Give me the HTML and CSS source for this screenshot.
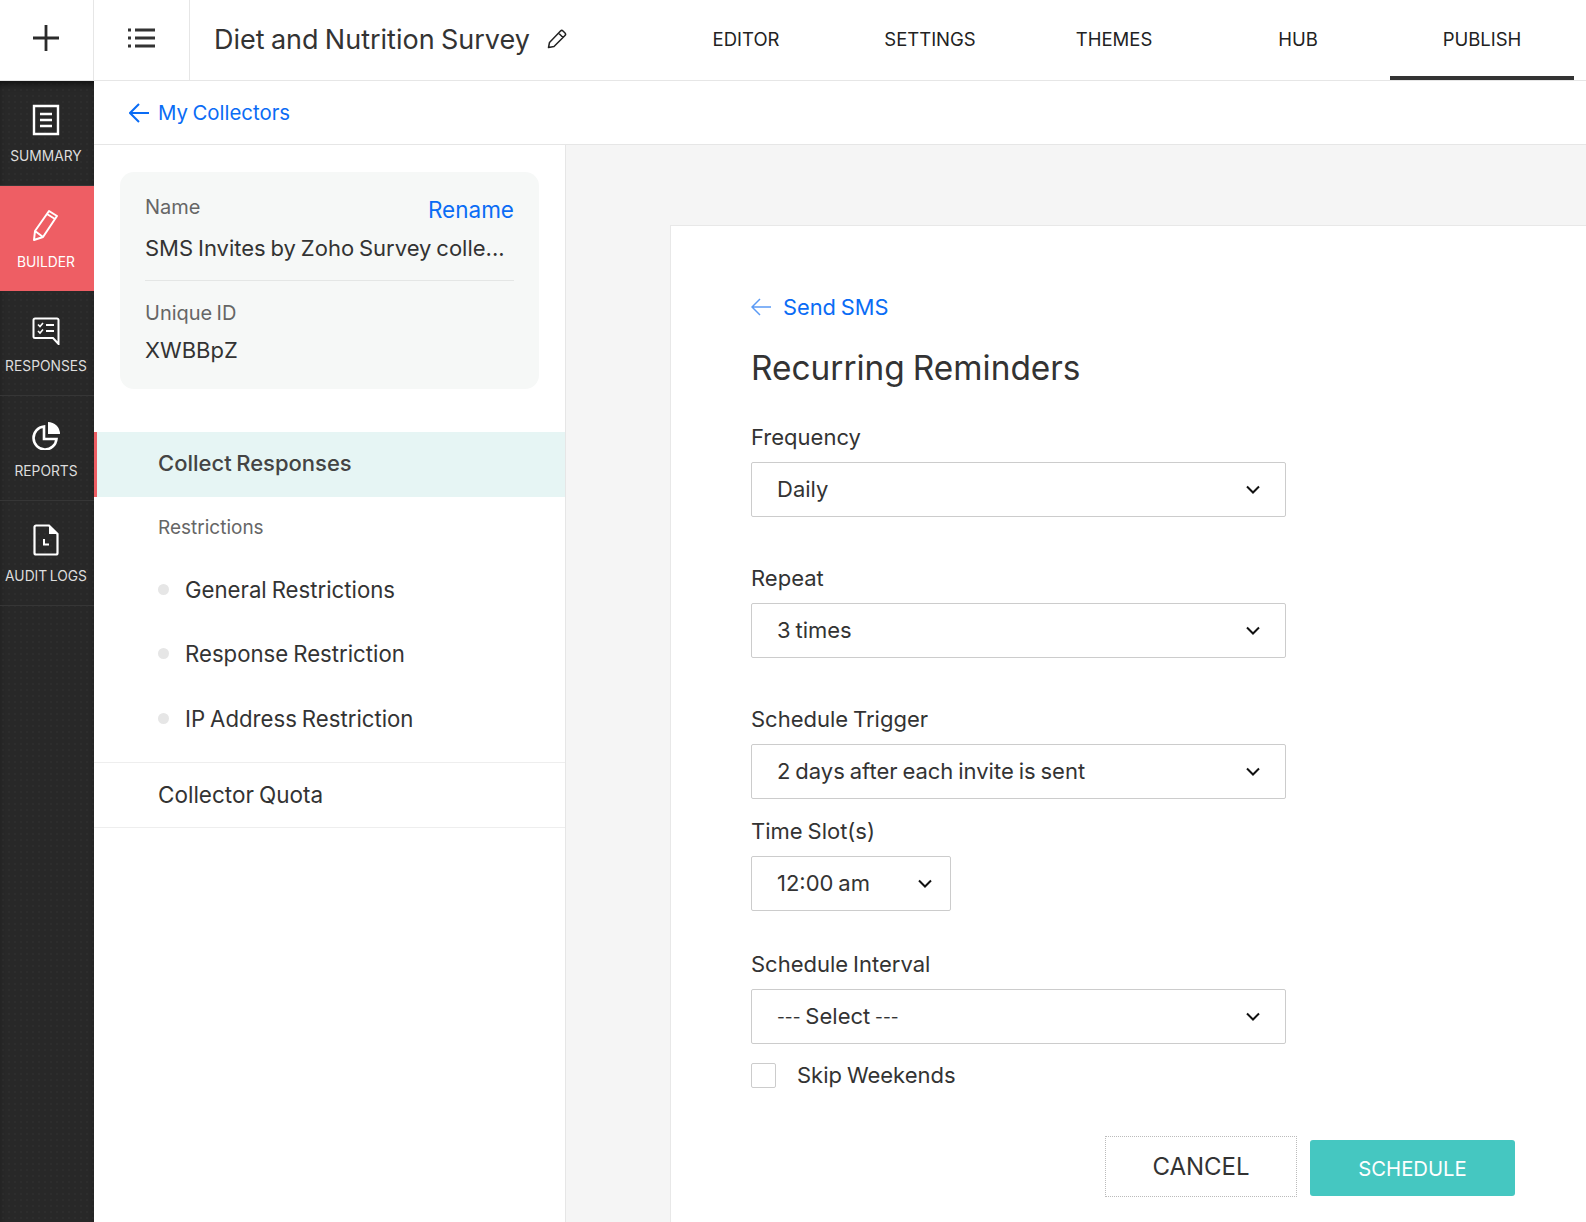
FILE: index.html
```html
<!DOCTYPE html>
<html lang="en-US">
<head>
  <title>Diet and Nutrition Survey</title>
  <meta charset="utf-8">
  <link rel="stylesheet" href="styles.css">
</head>
<body>
  <header class="top-bar">
    <div class="top-cell add-cell">
      <svg width="30" height="30" viewBox="0 0 30 30"><path d="M15 2v26M2 15h26" stroke="#2b2b2b" stroke-width="2.800" fill="none"/></svg>
    </div>
    <div class="top-cell list-cell">
      <svg width="27" height="22" viewBox="0 0 27 22"><path d="M7 3h20M7 11h20M7 19h20" stroke="#333" stroke-width="3" fill="none"/><path d="M0 3h3M0 11h3M0 19h3" stroke="#333" stroke-width="3" fill="none"/></svg>
    </div>
    <div class="survey-title">
      <span>Diet and Nutrition Survey</span>
      <svg width="20" height="20" viewBox="0 0 20 20"><path d="M1.500 18.500l1-5L13.500 2a1.800 1.800 0 0 1 2.500 0l2 2a1.800 1.800 0 0 1 0 2.500L7 17.500zM11.500 4l4.500 4.500" fill="none" stroke="#222" stroke-width="1.500" stroke-linejoin="round"/></svg>
    </div>
    <nav class="top-tabs">
      <a>EDITOR</a>
      <a>SETTINGS</a>
      <a>THEMES</a>
      <a>HUB</a>
      <a class="active">PUBLISH</a>
    </nav>
  </header>

  <div class="page">
    <aside class="rail">
      <a class="rail-item">
        <svg width="28" height="32" viewBox="0 0 28 32"><path d="M2 2h24v28H2z" fill="none" stroke="#fff" stroke-width="2.400"/><path d="M8 10h12M8 16h12M8 22h12" stroke="#fff" stroke-width="2.400" fill="none"/></svg>
        <span>SUMMARY</span>
      </a>
      <a class="rail-item active">
        <svg width="28" height="34" viewBox="0 0 28 34"><path d="M2 32l1-9L17 3l8 5-14 21zM15 6l8 5M3 23l8 6" fill="none" stroke="#fff" stroke-width="2" stroke-linejoin="round"/></svg>
        <span>BUILDER</span>
      </a>
      <a class="rail-item">
        <svg class="lift" width="28" height="28" viewBox="0 0 28 28"><path d="M3 1.500h22a1.500 1.500 0 0 1 1.500 1.500v24L21 21H3a1.500 1.500 0 0 1-1.500-1.500V3A1.500 1.500 0 0 1 3 1.500z" fill="none" stroke="#fff" stroke-width="2"/><path d="M6 7.500l2 2 3-3.500M6 14l2 2 3-3.500" fill="none" stroke="#fff" stroke-width="1.600"/><path d="M14 8h8M14 14h8" stroke="#fff" stroke-width="2" fill="none"/></svg>
        <span>RESPONSES</span>
      </a>
      <a class="rail-item">
        <svg class="lift" width="28" height="28" viewBox="0 0 28 28"><path d="M12 4.500a11.500 11.500 0 1 0 12.500 12.500H12z" fill="none" stroke="#fff" stroke-width="2.600"/><path d="M16 0a12 12 0 0 1 12 12H16z" fill="#fff"/></svg>
        <span>REPORTS</span>
      </a>
      <a class="rail-item">
        <svg width="26" height="32" viewBox="0 0 26 32"><path d="M3 1.500h13l8.500 8.500v19a1.500 1.500 0 0 1-1.500 1.500H3A1.500 1.500 0 0 1 1.500 29V3A1.500 1.500 0 0 1 3 1.500z" fill="none" stroke="#fff" stroke-width="2.200"/><path d="M16 2v8h8z" fill="#fff"/><path d="M11 15v5.500h5" fill="none" stroke="#fff" stroke-width="2"/></svg>
        <span>AUDIT LOGS</span>
      </a>
    </aside>

    <div class="content">
      <div class="crumb-bar">
        <a class="crumb">
          <svg width="20" height="20" viewBox="0 0 20 20"><path d="M10 1L1 10l9 9M1 10h19" fill="none" stroke="#0a6cf5" stroke-width="2"/></svg>
          <span>My Collectors</span>
        </a>
      </div>

      <div class="split">
        <section class="side-panel">
          <div class="info-card">
            <div class="info-top">
              <span class="info-label">Name</span>
              <a class="rename">Rename</a>
            </div>
            <div class="info-value">SMS Invites by Zoho Survey colle...</div>
            <div class="info-rule"></div>
            <div class="info-label">Unique ID</div>
            <div class="info-value id-value">XWBBpZ</div>
          </div>

          <div class="menu-row selected">Collect Responses</div>
          <div class="menu-heading">Restrictions</div>
          <ul class="sub-menu">
            <li>General Restrictions</li>
            <li>Response Restriction</li>
            <li>IP Address Restriction</li>
          </ul>
          <div class="menu-row quota">Collector Quota</div>
        </section>

        <main class="stage">
          <div class="form-card">
            <a class="back-link">
              <svg width="20" height="18" viewBox="0 0 20 18"><path d="M9 1L1 9l8 8M1 9h19" fill="none" stroke="#5b9bf5" stroke-width="1.500"/></svg>
              <span>Send SMS</span>
            </a>
            <h1>Recurring Reminders</h1>

            <label class="field-label">Frequency</label>
            <div class="select gap-big">
              <span>Daily</span>
              <svg class="chev" width="14" height="9" viewBox="0 0 14 9"><path d="M1 1.500l6 6 6-6" fill="none" stroke="#111" stroke-width="2"/></svg>
            </div>

            <label class="field-label">Repeat</label>
            <div class="select gap-big">
              <span>3 times</span>
              <svg class="chev" width="14" height="9" viewBox="0 0 14 9"><path d="M1 1.500l6 6 6-6" fill="none" stroke="#111" stroke-width="2"/></svg>
            </div>

            <label class="field-label">Schedule Trigger</label>
            <div class="select gap-small">
              <span>2 days after each invite is sent</span>
              <svg class="chev" width="14" height="9" viewBox="0 0 14 9"><path d="M1 1.500l6 6 6-6" fill="none" stroke="#111" stroke-width="2"/></svg>
            </div>

            <label class="field-label">Time Slot(s)</label>
            <div class="select narrow gap-slot">
              <span>12:00 am</span>
              <svg class="chev" width="14" height="9" viewBox="0 0 14 9"><path d="M1 1.500l6 6 6-6" fill="none" stroke="#111" stroke-width="2"/></svg>
            </div>

            <label class="field-label">Schedule Interval</label>
            <div class="select gap-check">
              <span><span class="dashes">---</span> Select <span class="dashes">---</span></span>
              <svg class="chev" width="14" height="9" viewBox="0 0 14 9"><path d="M1 1.500l6 6 6-6" fill="none" stroke="#111" stroke-width="2"/></svg>
            </div>

            <div class="check-row">
              <span class="check-box"></span>
              <span>Skip Weekends</span>
            </div>

            <div class="actions">
              <button class="btn-cancel">CANCEL</button>
              <button class="btn-schedule">SCHEDULE</button>
            </div>
          </div>
        </main>
      </div>
    </div>
  </div>
</body>
</html>
```

FILE: styles.css
```css
* {
  box-sizing: border-box;
}
html, body {
  height: 100%;
}
body {
  margin: 0;
  height: 1222px;
  overflow: hidden;
  display: flex;
  flex-direction: column;
  font-family: Inter, 'Liberation Sans', sans-serif;
  word-spacing: -1.3px;
  color: #333;
  background-color: #fff;
}
a {
  text-decoration: none;
}

/* top bar */
.top-bar {
  display: flex;
  height: 81px;
  flex: none;
  border-bottom: 1px solid #e6e6e6;
}
.top-cell {
  display: flex;
  align-items: center;
  justify-content: center;
  border-right: 1px solid #e6e6e6;
}
.add-cell {
  width: 94px;
  padding: 0 2px 5px 0;
}
.list-cell {
  width: 96px;
  padding-bottom: 5px;
}
.survey-title {
  display: flex;
  align-items: center;
  gap: 17px;
  padding: 0 0 2px 24px;
  font-size: 27px;
  color: #333;
  flex: 1;
}
.top-tabs {
  display: flex;
  margin-right: 12px;
}
.top-tabs a {
  width: 184px;
  display: flex;
  align-items: center;
  justify-content: center;
  padding-top: 2px;
  font-size: 18.500px;
  color: #222;
  border-bottom: 4px solid transparent;
}
.top-tabs a.active {
  border-bottom-color: #333;
}

/* layout */
.page {
  display: flex;
  flex: 1;
  min-height: 0;
}
.rail {
  width: 94px;
  flex: none;
  background-color: #282828;
  background-image: radial-gradient(#2d2d2d 1px, transparent 1px);
  background-size: 6px 6px;
  box-shadow: inset 0 6px 6px -3px #111;
}
.rail-item {
  height: 105px;
  display: flex;
  flex-direction: column;
  align-items: center;
  justify-content: flex-end;
  padding: 0 2px 21px 0;
  gap: 12px;
  font-size: 13.800px;
  color: #ddd;
  border-bottom: 1px solid #363636;
  white-space: nowrap;
}
.rail-item .lift {
  margin-bottom: 1px;
}
.rail-item.active {
  background-color: #ee5e64;
  color: #fff;
  border-bottom: none;
}
.content {
  flex: 1;
  display: flex;
  flex-direction: column;
  min-width: 0;
}
.crumb-bar {
  height: 64px;
  flex: none;
  display: flex;
  align-items: center;
  padding-left: 35px;
  border-bottom: 1px solid #e6e6e6;
}
.crumb {
  display: flex;
  align-items: center;
  gap: 9px;
  color: #0a6cf5;
  font-size: 20.400px;
}
.split {
  flex: 1;
  display: flex;
  min-height: 0;
}

/* left panel */
.side-panel {
  width: 472px;
  flex: none;
  border-right: 1px solid #e6e6e6;
  padding-top: 27px;
}
.info-card {
  margin: 0 26px;
  height: 217px;
  padding: 23px 25px 0;
  background-color: #f6f8f7;
  border-radius: 14px;
}
.info-top {
  display: flex;
  justify-content: space-between;
  align-items: flex-start;
}
.info-label {
  font-size: 20px;
  color: #666;
}
.rename {
  padding-top: 1px;
  font-size: 22.500px;
  color: #0a6cf5;
}
.info-value {
  margin-top: 12px;
  font-size: 22px;
  color: #333;
  white-space: nowrap;
}
.info-rule {
  height: 1px;
  background-color: #e4e6e5;
  margin: 19px 0 20px;
}
.id-value {
  margin-top: 12px;
}
.menu-row {
  height: 65px;
  display: flex;
  align-items: center;
  padding: 0 0 3px 64px;
  font-size: 22.500px;
  color: #333;
}
.menu-row.selected {
  margin-top: 43px;
  background-color: #e6f5f4;
  border-left: 3px solid #ee5e64;
  padding-left: 61px;
  font-size: 22px;
  font-weight: 500;
  color: #444;
}
.menu-heading {
  padding-left: 64px;
  margin-top: 19px;
  font-size: 19px;
  color: #666;
}
.sub-menu {
  list-style: none;
  margin: 18px 0 0;
  padding: 0 0 11px 64px;
  border-bottom: 1px solid #eee;
}
.sub-menu li {
  height: 64.500px;
  display: flex;
  align-items: center;
  font-size: 22.200px;
  color: #333;
}
.sub-menu li::before {
  content: "";
  width: 11px;
  height: 11px;
  border-radius: 50%;
  background-color: #e6e6e6;
  margin-right: 16px;
}
.menu-row.quota {
  padding-bottom: 1px;
  border-bottom: 1px solid #eee;
}

/* form */
.stage {
  flex: 1;
  min-width: 0;
  background-color: #f5f5f5;
  padding: 80px 0 0 104px;
}
.form-card {
  height: 100%;
  background-color: #fff;
  border: 1px solid #e8e8e8;
  border-right: none;
  border-bottom: none;
  padding: 68px 0 0 80px;
}
.back-link {
  display: flex;
  align-items: center;
  gap: 12px;
  color: #0a6cf5;
  font-size: 21.800px;
}
h1 {
  margin: 28px 0 0;
  font-size: 33.400px;
  font-weight: 400;
  color: #333;
}
.field-label {
  display: block;
  font-size: 22px;
  color: #333;
  margin-bottom: 12px;
}
h1 + .field-label {
  margin-top: 36px;
}
.select {
  width: 535px;
  height: 55px;
  display: flex;
  align-items: center;
  justify-content: space-between;
  padding: 0 25px 1px;
  font-size: 22px;
  color: #333;
  border: 1px solid #ccc;
  border-radius: 2px;
}
.select.narrow {
  width: 200px;
  padding-right: 18px;
}
.dashes {
  font-size: 17px;
  vertical-align: 1px;
}
.gap-big {
  margin-bottom: 48px;
}
.gap-small {
  margin-bottom: 19px;
}
.gap-slot {
  margin-bottom: 40px;
}
.gap-check {
  margin-bottom: 18px;
}
.check-row {
  display: flex;
  align-items: center;
  gap: 21px;
  font-size: 22px;
  color: #333;
}
.check-box {
  width: 25px;
  height: 25px;
  border: 1px solid #ccc;
  border-radius: 2px;
}
.actions {
  display: flex;
  align-items: flex-start;
  gap: 13px;
  width: 764px;
  justify-content: flex-end;
  margin-top: 48px;
}
.btn-cancel, .btn-schedule {
  font-family: inherit;
  padding: 0;
}
.btn-cancel {
  width: 192px;
  height: 61px;
  background: #fff;
  border: 1px dotted #bbb;
  font-size: 24px;
  color: #333;
}
.btn-schedule {
  width: 205px;
  height: 56px;
  margin-top: 4px;
  background-color: #45c7c1;
  border: none;
  border-radius: 3px;
  font-size: 20.300px;
  color: #fff;
}
```
